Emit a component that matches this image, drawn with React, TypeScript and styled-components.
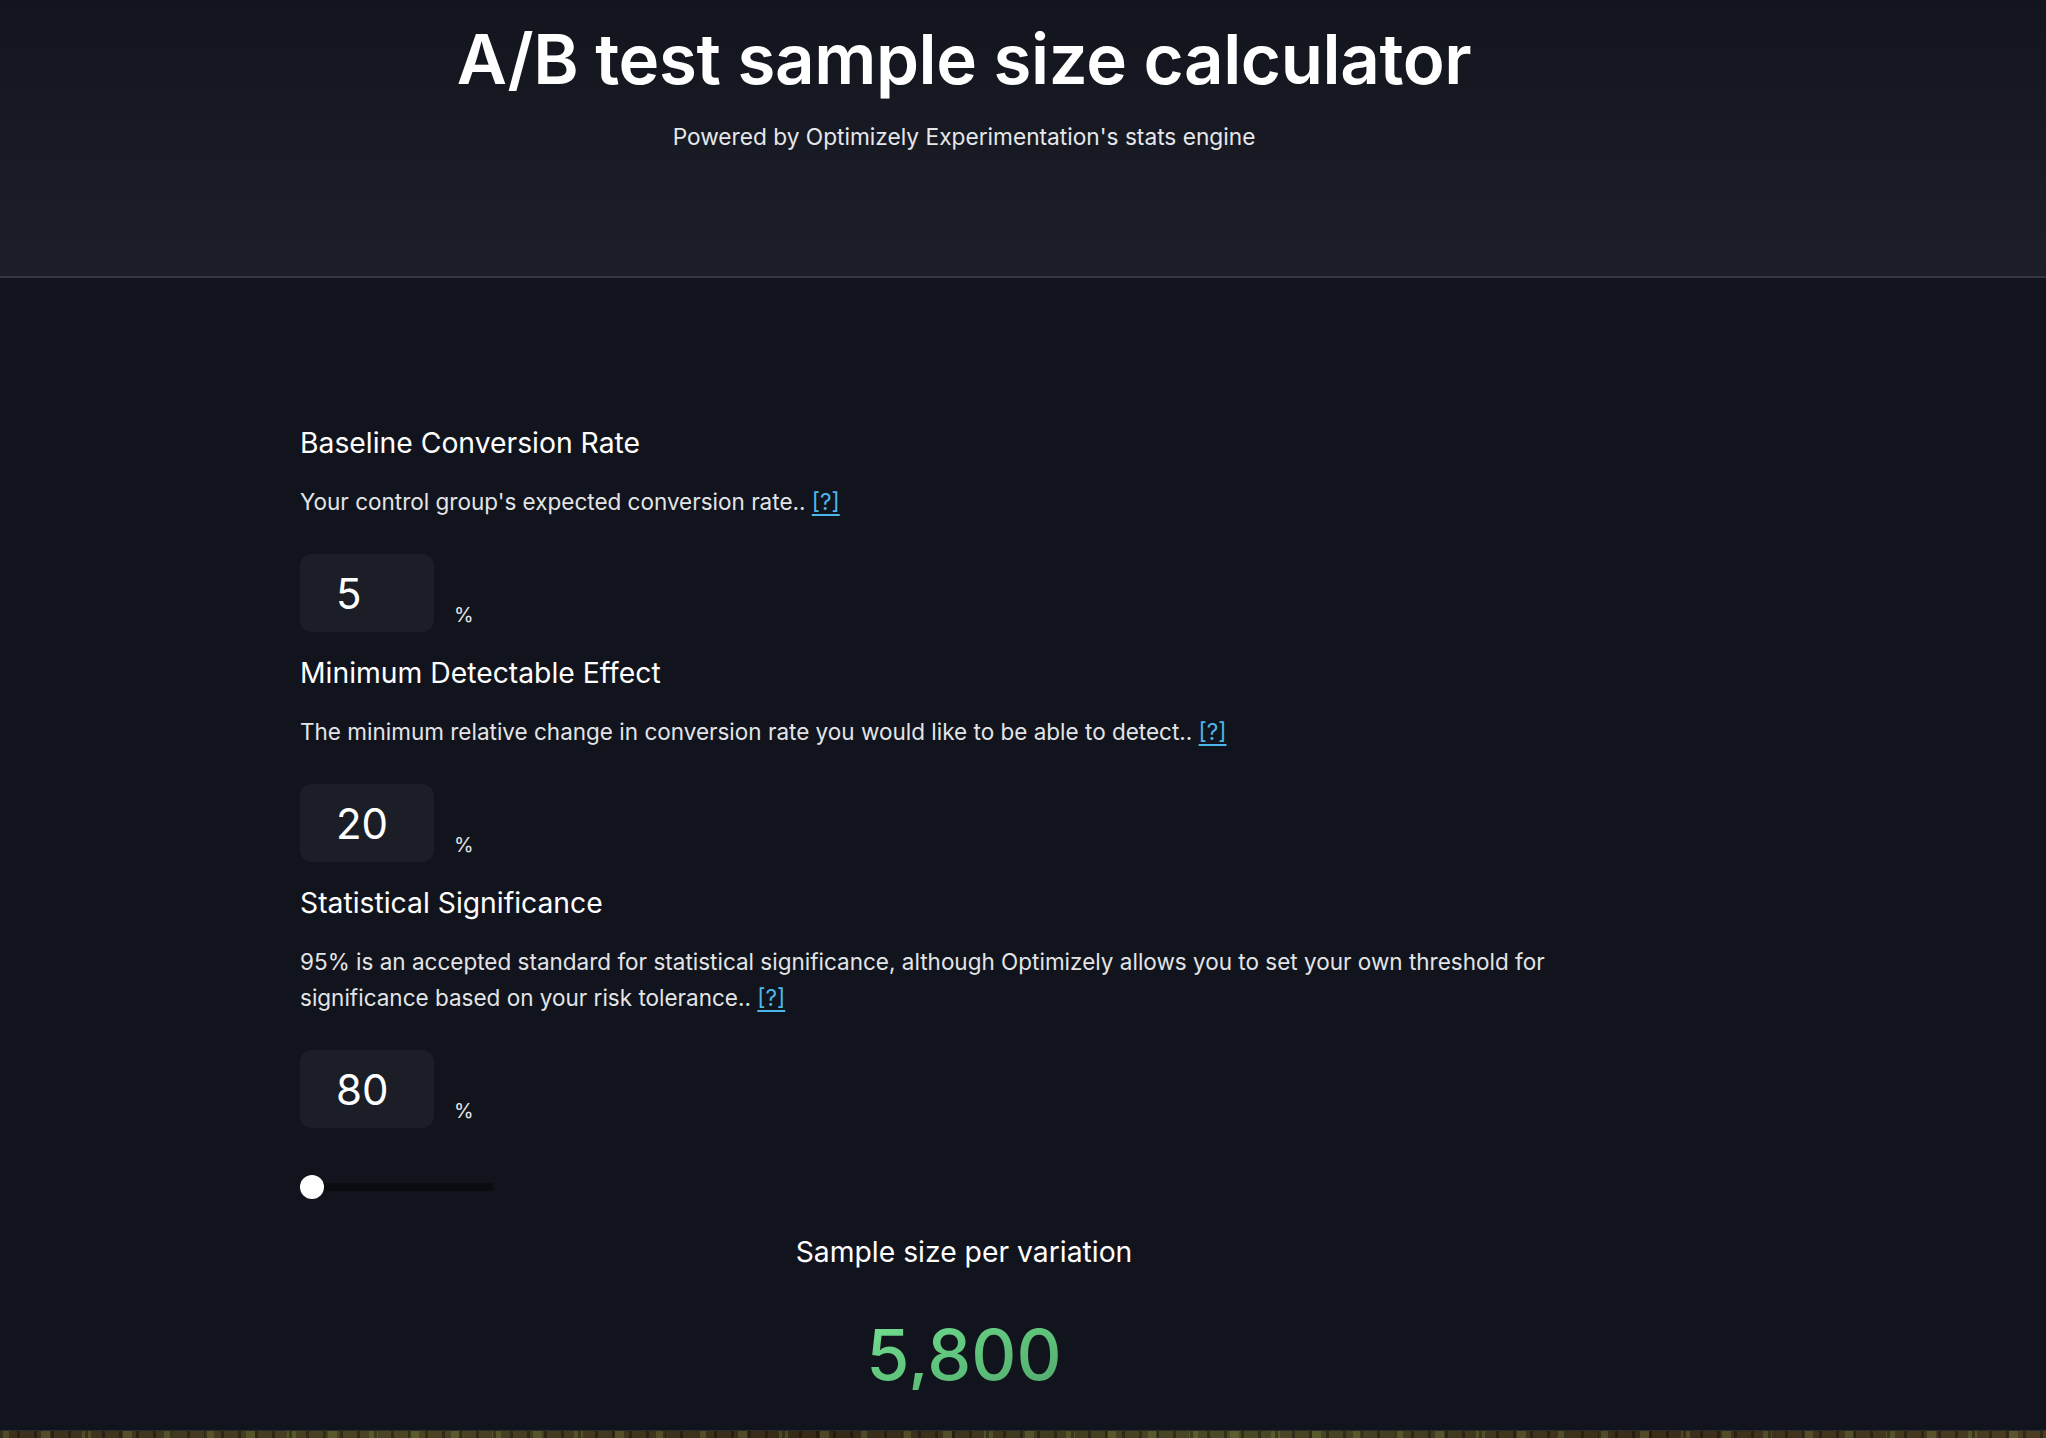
import React from 'react'
import styled, { createGlobalStyle } from 'styled-components'

const GlobalStyle = createGlobalStyle`
  html, body {
    margin: 0;
    padding: 0;
    background-color: #11141c;
    font-family: Inter, 'Noto Sans', 'Liberation Sans', sans-serif;
    color: #ffffff;
  }
`

const StyledHeader = styled.header`
  height: 276px;
  background: linear-gradient(180deg, #12151d 0%, #1c1f28 100%);
  border-bottom: 2px solid #33363e;
  box-sizing: content-box;
`

const StyledColumn = styled.div`
  width: 1328px;
  margin-left: 300px;
`

const StyledHeaderInner = styled(StyledColumn)`
  padding-top: 15px;
  text-align: center;
`

const StyledTitle = styled.h1`
  margin: 0;
  font-size: 69px;
  line-height: 88px;
  font-weight: 600;
  letter-spacing: -0.4px;
  color: #ffffff;
`

const StyledSubtitle = styled.p`
  margin: 19px 0 0;
  font-size: 22.7px;
  line-height: 30px;
  color: #e6e7eb;
`

const StyledMain = styled(StyledColumn)`
  padding-top: 147px;
  padding-bottom: 40px;
`

const StyledField = styled.section`
  & + & {
    margin-top: 23px;
  }
`

const StyledLabel = styled.h2`
  margin: 0;
  font-size: 28.3px;
  line-height: 36px;
  font-weight: 400;
  color: #ffffff;
`

const StyledHint = styled.p`
  margin: 23px 0 0;
  max-width: 1260px;
  font-size: 22.5px;
  line-height: 36px;
  color: #e3e4e8;
`

const StyledLink = styled.a`
  color: #4cb7ea;
  text-decoration: underline;
  text-decoration-thickness: 2px;
  text-underline-offset: 4px;
  cursor: pointer;
`

const StyledInputRow = styled.div`
  display: flex;
  align-items: flex-end;
  gap: 20px;
  margin-top: 34px;
`

const StyledInputBox = styled.div`
  display: flex;
  align-items: center;
  width: 134px;
  height: 78px;
  padding-left: 36px;
  box-sizing: border-box;
  border-radius: 12px;
  background-color: #1b1e26;
  font-size: 42px;
  color: #ffffff;
`

const StyledUnit = styled.span`
  margin-bottom: 5px;
  font-size: 20px;
  line-height: 24px;
  color: #e3e4e8;
`

const StyledSlider = styled.div`
  position: relative;
  width: 193px;
  height: 24px;
  margin-top: 47px;
  display: flex;
  align-items: center;
`

const StyledTrack = styled.div`
  width: 100%;
  height: 8px;
  background-color: #0b0c10;
`

const StyledThumb = styled.div`
  position: absolute;
  left: 0;
  top: 0;
  width: 24px;
  height: 24px;
  border-radius: 50%;
  background-color: #ffffff;
`

const StyledResult = styled.div`
  margin-top: 35px;
  text-align: center;
`

const StyledResultLabel = styled.div`
  font-size: 28.3px;
  line-height: 36px;
  color: #ffffff;
`

const StyledResultValue = styled.div`
  display: inline-block;
  margin-top: 50px;
  font-size: 70px;
  line-height: 70px;
  font-weight: 500;
  background: linear-gradient(160deg, #74df91 0%, #5fc47c 50%, #52aa6d 100%);
  -webkit-background-clip: text;
  background-clip: text;
  color: transparent;
`

const StyledFooter = styled.footer`
  height: 160px;
  border-top: 1px solid #2a2c30;
  background:
    repeating-linear-gradient(90deg, rgba(0, 0, 0, 0.35) 0 3px, transparent 3px 17px),
    repeating-linear-gradient(90deg, rgba(120, 130, 60, 0.35) 0 9px, transparent 9px 41px),
    linear-gradient(90deg, #3a2e1c 0%, #4b4524 20%, #352817 40%, #4a4a26 60%, #3a2c19 80%, #4a3d22 100%);
`

type FieldProps = {
  label: string
  hint: string
  value: string
}

const Field = ({ label, hint, value }: FieldProps) => (
  <StyledField>
    <StyledLabel>{label}</StyledLabel>
    <StyledHint>
      {hint} <StyledLink>[?]</StyledLink>
    </StyledHint>
    <StyledInputRow>
      <StyledInputBox>{value}</StyledInputBox>
      <StyledUnit>%</StyledUnit>
    </StyledInputRow>
  </StyledField>
)

const fields: FieldProps[] = [
  {
    label: 'Baseline Conversion Rate',
    hint: "Your control group's expected conversion rate..",
    value: '5',
  },
  {
    label: 'Minimum Detectable Effect',
    hint: 'The minimum relative change in conversion rate you would like to be able to detect..',
    value: '20',
  },
  {
    label: 'Statistical Significance',
    hint: '95% is an accepted standard for statistical significance, although Optimizely allows you to set your own threshold for significance based on your risk tolerance..',
    value: '80',
  },
]

const App = () => {
  return (
    <>
      <GlobalStyle />
      <StyledHeader>
        <StyledHeaderInner>
          <StyledTitle>A/B test sample size calculator</StyledTitle>
          <StyledSubtitle>Powered by Optimizely Experimentation's stats engine</StyledSubtitle>
        </StyledHeaderInner>
      </StyledHeader>
      <StyledMain>
        {fields.map((field) => (
          <Field key={field.label} {...field} />
        ))}
        <StyledSlider>
          <StyledTrack />
          <StyledThumb />
        </StyledSlider>
        <StyledResult>
          <StyledResultLabel>Sample size per variation</StyledResultLabel>
          <StyledResultValue>5,800</StyledResultValue>
        </StyledResult>
      </StyledMain>
      <StyledFooter />
    </>
  )
}

export default App
